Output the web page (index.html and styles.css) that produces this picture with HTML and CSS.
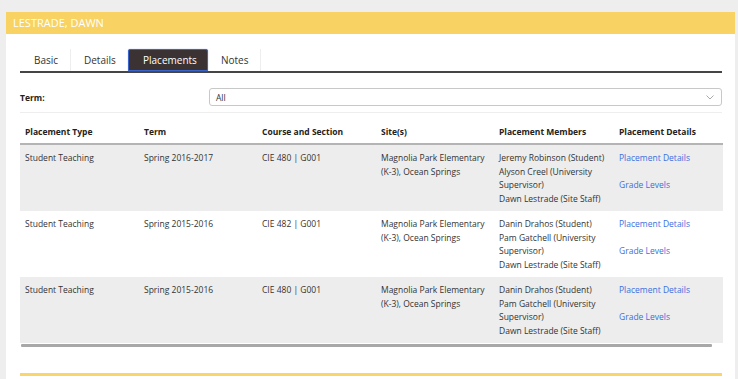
FILE: index.html
```html
<!DOCTYPE html>
<html>
<head>
<meta charset="utf-8">
<link rel="stylesheet" href="styles.css">
</head>
<body>
<div class="panel">
  <div class="panel-head">LESTRADE, DAWN</div>
  <div class="panel-body">
    <div class="tabs">
      <div class="tab">Basic</div>
      <div class="tab">Details</div>
      <div class="tab active">Placements</div>
      <div class="tab">Notes</div>
    </div>
    <div class="term-row">
      <div class="term-label">Term:</div>
      <div class="select">
        <span>All</span>
        <svg class="chev" width="8" height="5" viewBox="0 0 8 5"><path d="M0.5 0.5 L4 4 L7.5 0.5" fill="none" stroke="#aaa" stroke-width="1"/></svg>
      </div>
    </div>
    <div class="table-wrap">
      <table class="grid">
        <colgroup>
          <col class="c1"><col class="c2"><col class="c3"><col class="c4"><col class="c5"><col class="c6">
        </colgroup>
        <thead>
          <tr>
            <th>Placement Type</th><th>Term</th><th>Course and Section</th><th>Site(s)</th><th>Placement Members</th><th>Placement Details</th>
          </tr>
        </thead>
        <tbody>
          <tr class="odd">
            <td>Student Teaching</td><td>Spring 2016-2017</td><td>CIE 480 | G001</td>
            <td>Magnolia Park Elementary (K-3), Ocean Springs</td>
            <td>Jeremy Robinson (Student)<br>Alyson Creel (University Supervisor)<br>Dawn Lestrade (Site Staff)</td>
            <td><a class="lnk">Placement Details</a><a class="lnk second">Grade Levels</a></td>
          </tr>
          <tr>
            <td>Student Teaching</td><td>Spring 2015-2016</td><td>CIE 482 | G001</td>
            <td>Magnolia Park Elementary (K-3), Ocean Springs</td>
            <td>Danin Drahos (Student)<br>Pam Gatchell (University Supervisor)<br>Dawn Lestrade (Site Staff)</td>
            <td><a class="lnk">Placement Details</a><a class="lnk second">Grade Levels</a></td>
          </tr>
          <tr class="odd">
            <td>Student Teaching</td><td>Spring 2015-2016</td><td>CIE 480 | G001</td>
            <td>Magnolia Park Elementary (K-3), Ocean Springs</td>
            <td>Danin Drahos (Student)<br>Pam Gatchell (University Supervisor)<br>Dawn Lestrade (Site Staff)</td>
            <td><a class="lnk">Placement Details</a><a class="lnk second">Grade Levels</a></td>
          </tr>
        </tbody>
      </table>
      <div class="scrollbar"></div>
    </div>
    <div class="bottom-line"></div>
  </div>
</div>
</body>
</html>
```

FILE: styles.css
```css
html, body {
  margin: 0;
  padding: 0;
  background: #eeeeee;
  font-family: "Open Sans", "Liberation Sans", sans-serif;
  color: #333;
}
body {
  padding: 12px 3px 0 6px;
  height: 379px;
  box-sizing: border-box;
  overflow: hidden;
}
.panel {
  background: #fff;
  width: 729px;
  height: 367px;
}
.panel-head {
  background: #f8d262;
  color: #fff;
  font-size: 11px;
  height: 22px;
  line-height: 22px;
  padding-left: 7px;
}
.panel-body {
  padding: 15px 13px 0 14px;
}
.tabs {
  display: flex;
  border-bottom: 2px solid #454545;
  height: 22px;
}
.tab {
  font-size: 10px;
  line-height: 22px;
  padding: 0 0 0 14px;
  color: #333;
  border-right: 1px solid #eee;
  box-sizing: border-box;
}
.tab:nth-child(1) { width: 51px; }
.tab:nth-child(2) { width: 57px; padding-left: 13px; border-right: none; }
.tab:nth-child(3) { width: 80px; }
.tab:nth-child(4) { width: 53px; padding-left: 13px; }
.tab.active {
  background: #3b3333;
  color: #fff;
  border: 1px solid #3a64cc;
  box-shadow: 0 0 1px #5a84e0;
  border-radius: 2px 2px 0 0;
  line-height: 20px;
  padding-left: 14px;
}
.term-row {
  display: flex;
  align-items: center;
  margin-top: 15px;
  padding-bottom: 6px;
  border-bottom: 1px solid #eee;
}
.term-label {
  width: 189px;
  font-size: 8.5px;
  font-weight: 700;
  color: #222;
}
.select {
  flex: 1;
  height: 18px;
  border: 1px solid #c8c8c8;
  border-radius: 3px;
  box-sizing: border-box;
  display: flex;
  align-items: center;
  justify-content: space-between;
  padding: 0 7px 0 6px;
  font-size: 8.5px;
  color: #333;
}
.chev { display: block; }
.table-wrap {
  margin-top: 6px;
}
.grid {
  width: 703px;
  border-collapse: collapse;
  table-layout: fixed;
  font-size: 8.5px;
}
.c1 { width: 119px; }
.c2 { width: 118px; }
.c3 { width: 119px; }
.c4 { width: 118px; }
.c5 { width: 120px; }
.c6 { width: 109px; }
.grid thead tr {
  border-bottom: 2px solid #b4b4b4;
}
.grid th {
  text-align: left;
  font-weight: 700;
  color: #222;
  padding: 6px 5px 5px;
  line-height: 13px;
}
.grid td {
  vertical-align: top;
  padding: 6px 5px 5px;
  line-height: 13.7px;
  color: #333;
  height: 55px;
}
.grid tr.odd td { background: #ededed; }
.lnk {
  display: block;
  color: #3a70de;
  text-decoration: none;
}
.lnk.second { margin-top: 13.7px; }
.scrollbar {
  height: 3px;
  width: 691px;
  margin: 1px 0 0 1px;
  background: #a8a8a8;
  border-radius: 1px;
}
.bottom-line {
  margin-top: 26px;
  height: 3px;
  background: #f8d66c;
}
```
